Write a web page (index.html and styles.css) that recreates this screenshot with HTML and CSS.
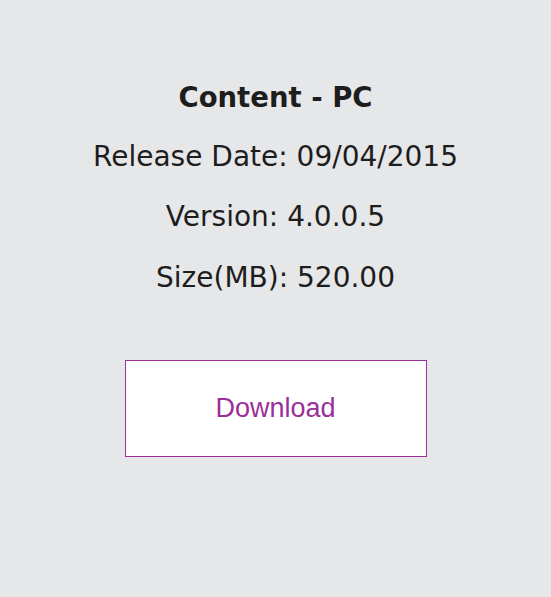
FILE: index.html
```html
<!DOCTYPE html>
<html lang="en">
<head>
  <meta charset="UTF-8">
  <title>Content - PC</title>
  <link rel="stylesheet" href="styles.css">
</head>
<body>
  <!-- Download panel -->
  <section class="panel">
    <h2 class="title">Content - PC</h2>
    <p class="info">Release Date: 09/04/2015</p>
    <p class="info">Version: 4.0.0.5</p>
    <p class="info">Size(MB): 520.00</p>
    <a class="download" href="#">Download</a>
  </section>
</body>
</html>
```

FILE: styles.css
```css
/* Reset & Base */
* { box-sizing: border-box; margin: 0; padding: 0; }
body { background: #e6e7e9; color: #1d1d1d; font-family: 'DejaVu Sans', sans-serif; }
a { text-decoration: none; }
/* Panel */
.panel {
  display: flex;
  flex-direction: column;
  align-items: center;
  padding-top: 79px;
}
.title { font-size: 27.5px; font-weight: bold; line-height: 36px; }
.info { font-size: 28px; line-height: 36px; margin-top: 24px; }
.info:last-of-type { margin-top: 25px; }
/* Button */
.download {
  display: flex;
  align-items: center;
  justify-content: center;
  margin-top: 64px;
  width: 302px;
  height: 97px;
  background: #fff;
  border: 1px solid #9b2f9b;
  color: #9b2f9b;
  font-family: 'Liberation Sans', Arial, sans-serif;
  font-size: 27px;
}
```
